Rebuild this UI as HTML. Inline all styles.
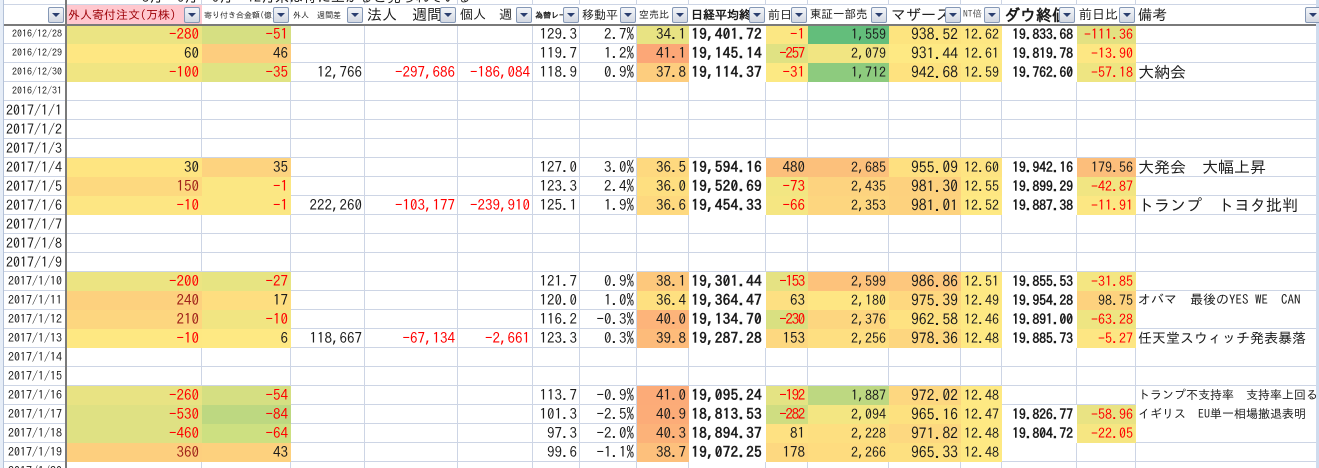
<!DOCTYPE html>
<html lang="ja"><head><meta charset="utf-8"><title>外人寄付注文</title>
<style>
html,body{margin:0;padding:0;width:1319px;height:468px;overflow:hidden;background:#fff}
body{position:relative;font-family:"IPAGothic","Liberation Mono","Noto Sans CJK JP",monospace;color:#1c1c1c}
table{position:absolute;left:0;top:0;border-collapse:separate;border-spacing:0;table-layout:fixed;width:1317px}
td{box-sizing:border-box;height:19px;padding:0 2px 0 0;border-right:1px solid #cdd5e5;border-bottom:1px solid #cdd5e5;font-size:15px;line-height:18px;text-align:right;white-space:nowrap;overflow:hidden}
td[style]{border-color:transparent}
tr.top td{height:5px;line-height:0;font-size:0}
tr.hd td{height:20px;border-right-color:transparent;border-bottom-color:transparent;text-align:left;padding:0 0 0 2px;line-height:18px}
.a{font-size:10px;padding-right:3px}.b{font-size:14px;padding-right:3px}.c{font-size:12px;padding-right:3px}
.r{color:#f00}.k{color:#a0221a}
.s{letter-spacing:-1.3px;padding-right:3px}
.n{font-weight:bold;font-size:15px;letter-spacing:.35px;padding-right:3px}
.w{font-weight:bold;font-size:13.5px;padding-right:3px}
.t{font-size:14px}.m{font-size:15.7px}
.note{text-align:left;padding-left:2px;font-size:16px}
.o{position:absolute;top:7px;width:16px;height:16px;box-sizing:border-box;border:1px solid #8598b6;border-radius:2px;background:linear-gradient(#f3f5f9,#d3d8e2)}
.o:after{content:"";position:absolute;left:3px;top:5px;border-left:4px solid transparent;border-right:4px solid transparent;border-top:4px solid #2b3f70}
.v{position:absolute;background:#7a7a7a}
.cut{position:absolute;left:142px;top:-10px;height:15px;font-size:14px;line-height:15px;white-space:pre;color:#222}
</style></head><body>
<table>
<colgroup><col style="width:66px"><col style="width:136px"><col style="width:89px"><col style="width:74px"><col style="width:93px"><col style="width:75px"><col style="width:47px"><col style="width:57px"><col style="width:52px"><col style="width:77px"><col style="width:42px"><col style="width:81px"><col style="width:72px"><col style="width:41px"><col style="width:75px"><col style="width:59px"><col style="width:181px"></colgroup>
<tr class="top"><td></td><td></td><td></td><td></td><td></td><td></td><td></td><td></td><td></td><td></td><td></td><td></td><td></td><td></td><td></td><td></td><td></td></tr>
<tr class="hd"><td></td>
<td style="background:#ffc7ce;color:#9c0006;font-size:12px">外人寄付注文(万株)</td>
<td style="font-size:8px">寄り付き合金額(億)</td>
<td style="font-size:8px">外人　週間差</td>
<td style="font-size:15px">法人　週間</td>
<td style="font-size:13px">個人　週</td>
<td style="font-size:8px;font-weight:bold">為替レー</td>
<td style="font-size:12px">移動平</td>
<td style="font-size:10px">空売比</td>
<td style="font-size:12px;font-weight:bold">日経平均終</td>
<td style="font-size:12px">前日</td>
<td style="font-size:11.5px">東証一部売</td>
<td style="font-size:15px">マザーズ</td>
<td style="font-size:9.5px;color:#555">NT倍</td>
<td style="font-size:16px;font-weight:bold">ダウ終値</td>
<td style="font-size:13px">前日比</td>
<td style="font-size:14.5px">備考</td></tr>
<tr><td class="a">2016/12/28</td><td class="r" style="background:#ebe483">-280</td><td class="r" style="background:#d6df82">-51</td><td></td><td></td><td></td><td>129.3</td><td>2.7%</td><td style="background:#e8e383">34.1</td><td class="n" style="background:#fff">19,401.72</td><td class="r" style="background:#fbe783">-1</td><td class="t" style="background:#63be7b">1,559</td><td class="m" style="background:#fde47f">938.52</td><td class="t" style="background:#fee782">12.62</td><td class="w" style="background:#fff">19.833.68</td><td class="t r" style="background:#e3e182">-111.36</td><td></td></tr>
<tr><td class="a">2016/12/29</td><td style="background:#fee782">60</td><td style="background:#fdcd7e">46</td><td></td><td></td><td></td><td>119.7</td><td>1.2%</td><td style="background:#fca777">41.1</td><td class="n" style="background:#fff">19,145.14</td><td class="s r" style="background:#e0e283">-257</td><td class="t" style="background:#f1e582">2,079</td><td class="m" style="background:#fee983">931.44</td><td class="t" style="background:#fee983">12.61</td><td class="w" style="background:#fff">19.819.78</td><td class="t r" style="background:#fde783">-13.90</td><td></td></tr>
<tr><td class="a">2016/12/30</td><td class="r" style="background:#f0e582">-100</td><td class="r" style="background:#e0e383">-35</td><td>12,766</td><td class="r">-297,686</td><td class="r">-186,084</td><td>118.9</td><td>0.9%</td><td style="background:#fdcd7e">37.8</td><td class="n" style="background:#fff">19,114.37</td><td class="r" style="background:#fce983">-31</td><td class="t" style="background:#8dcb7e">1,712</td><td class="m" style="background:#fee27f">942.68</td><td class="t" style="background:#fde883">12.59</td><td class="w" style="background:#fff">19.762.60</td><td class="t r" style="background:#eee582">-57.18</td><td class="note">大納会</td></tr>
<tr><td class="a">2016/12/31</td><td></td><td></td><td></td><td></td><td></td><td></td><td></td><td></td><td></td><td></td><td></td><td></td><td></td><td></td><td></td><td></td></tr>
<tr><td class="b">2017/1/1</td><td></td><td></td><td></td><td></td><td></td><td></td><td></td><td></td><td></td><td></td><td></td><td></td><td></td><td></td><td></td><td></td></tr>
<tr><td class="b">2017/1/2</td><td></td><td></td><td></td><td></td><td></td><td></td><td></td><td></td><td></td><td></td><td></td><td></td><td></td><td></td><td></td><td></td></tr>
<tr><td class="b">2017/1/3</td><td></td><td></td><td></td><td></td><td></td><td></td><td></td><td></td><td></td><td></td><td></td><td></td><td></td><td></td><td></td><td></td></tr>
<tr><td class="b">2017/1/4</td><td style="background:#fee581">30</td><td style="background:#fdd37f">35</td><td></td><td></td><td></td><td>127.0</td><td>3.0%</td><td style="background:#fed97f">36.5</td><td class="n" style="background:#fff">19,594.16</td><td style="background:#fcbf7b">480</td><td class="t" style="background:#fcc07b">2,685</td><td class="m" style="background:#fee080">955.09</td><td class="t" style="background:#fee482">12.60</td><td class="w" style="background:#fff">19.942.16</td><td class="t" style="background:#fcbe7b">179.56</td><td class="note">大発会　大幅上昇</td></tr>
<tr><td class="b">2017/1/5</td><td class="k" style="background:#fdd97f">150</td><td class="r" style="background:#fbe783">-1</td><td></td><td></td><td></td><td>123.3</td><td>2.4%</td><td style="background:#fedf80">36.0</td><td class="n" style="background:#fff">19,520.69</td><td class="r" style="background:#f2e682">-73</td><td class="t" style="background:#fdd37f">2,435</td><td class="m" style="background:#fdd17e">981.30</td><td class="t" style="background:#fee782">12.55</td><td class="w" style="background:#fff">19.899.29</td><td class="t r" style="background:#f1e582">-42.87</td><td></td></tr>
<tr><td class="b">2017/1/6</td><td class="r" style="background:#fde683">-10</td><td class="r" style="background:#fbe783">-1</td><td>222,260</td><td class="r">-103,177</td><td class="r">-239,910</td><td>125.1</td><td>1.9%</td><td style="background:#fed97f">36.6</td><td class="n" style="background:#fff">19,454.33</td><td class="r" style="background:#f5e682">-66</td><td class="t" style="background:#fdd67f">2,353</td><td class="m" style="background:#fdd27e">981.01</td><td class="t" style="background:#fee983">12.52</td><td class="w" style="background:#fff">19.887.38</td><td class="t r" style="background:#fce783">-11.91</td><td class="note">トランプ　トヨタ批判</td></tr>
<tr><td class="b">2017/1/7</td><td></td><td></td><td></td><td></td><td></td><td></td><td></td><td></td><td></td><td></td><td></td><td></td><td></td><td></td><td></td><td></td></tr>
<tr><td class="b">2017/1/8</td><td></td><td></td><td></td><td></td><td></td><td></td><td></td><td></td><td></td><td></td><td></td><td></td><td></td><td></td><td></td><td></td></tr>
<tr><td class="b">2017/1/9</td><td></td><td></td><td></td><td></td><td></td><td></td><td></td><td></td><td></td><td></td><td></td><td></td><td></td><td></td><td></td><td></td></tr>
<tr><td class="c">2017/1/10</td><td class="r" style="background:#ece482">-200</td><td class="r" style="background:#e7e482">-27</td><td></td><td></td><td></td><td>121.7</td><td>0.9%</td><td style="background:#fdc87c">38.1</td><td class="n" style="background:#fff">19,301.44</td><td class="s r" style="background:#e5e283">-153</td><td class="t" style="background:#fdc27b">2,599</td><td class="m" style="background:#fdc77d">986.86</td><td class="t" style="background:#fee983">12.51</td><td class="w" style="background:#fff">19.855.53</td><td class="t r" style="background:#f4e682">-31.85</td><td></td></tr>
<tr><td class="c">2017/1/11</td><td class="k" style="background:#fdd17e">240</td><td style="background:#fede80">17</td><td></td><td></td><td></td><td>120.0</td><td>1.0%</td><td style="background:#fee080">36.4</td><td class="n" style="background:#fff">19,364.47</td><td style="background:#fde082">63</td><td class="t" style="background:#fee683">2,180</td><td class="m" style="background:#fed87f">975.39</td><td class="t" style="background:#fee983">12.49</td><td class="w" style="background:#fff">19.954.28</td><td class="t" style="background:#fdd27e">98.75</td><td class="note" style="font-size:13px;background:#fff">オバマ　最後のYES WE　CAN</td></tr>
<tr><td class="c">2017/1/12</td><td class="k" style="background:#fdd67f">210</td><td class="r" style="background:#f1e582">-10</td><td></td><td></td><td></td><td>116.2</td><td>-0.3%</td><td style="background:#fdb47a">40.0</td><td class="n" style="background:#fff">19,134.70</td><td class="s r" style="background:#d9e081">-230</td><td class="t" style="background:#fdd67f">2,376</td><td class="m" style="background:#fee281">962.58</td><td class="t" style="background:#fee983">12.46</td><td class="w" style="background:#fff">19.891.00</td><td class="t r" style="background:#eee582">-63.28</td><td></td></tr>
<tr><td class="c">2017/1/13</td><td class="r" style="background:#fee882">-10</td><td style="background:#fee983">6</td><td>118,667</td><td class="r">-67,134</td><td class="r">-2,661</td><td>123.3</td><td>0.3%</td><td style="background:#fdbb7a">39.8</td><td class="n" style="background:#fff">19,287.28</td><td style="background:#fdd880">153</td><td class="t" style="background:#fedf81">2,256</td><td class="m" style="background:#fdd67f">978.36</td><td class="t" style="background:#fee983">12.48</td><td class="w" style="background:#fff">19.885.73</td><td class="t r" style="background:#fde683">-5.27</td><td class="note" style="font-size:14px;background:#fff">任天堂スウィッチ発表暴落</td></tr>
<tr><td class="c">2017/1/14</td><td></td><td></td><td></td><td></td><td></td><td></td><td></td><td></td><td></td><td></td><td></td><td></td><td></td><td></td><td></td><td></td></tr>
<tr><td class="c">2017/1/15</td><td></td><td></td><td></td><td></td><td></td><td></td><td></td><td></td><td></td><td></td><td></td><td></td><td></td><td></td><td></td><td></td></tr>
<tr><td class="c">2017/1/16</td><td class="r" style="background:#e8e383">-260</td><td class="r" style="background:#d5df82">-54</td><td></td><td></td><td></td><td>113.7</td><td>-0.9%</td><td style="background:#fcab78">41.0</td><td class="n" style="background:#fff">19,095.24</td><td class="s r" style="background:#e4e383">-192</td><td class="t" style="background:#bdd881">1,887</td><td class="m" style="background:#fdd780">972.02</td><td class="t" style="background:#fee983">12.48</td><td></td><td></td><td class="note" style="font-size:12px">トランプ不支持率　支持率上回る</td></tr>
<tr><td class="c">2017/1/17</td><td class="r" style="background:#dfe183">-530</td><td class="r" style="background:#bdd881">-84</td><td></td><td></td><td></td><td>101.3</td><td>-2.5%</td><td style="background:#fcac78">40.9</td><td class="n" style="background:#fff">18,813.53</td><td class="s r" style="background:#cfdd81">-282</td><td class="t" style="background:#f3e682">2,094</td><td class="m" style="background:#fde17f">965.16</td><td class="t" style="background:#fee983">12.47</td><td class="w" style="background:#fff">19.826.77</td><td class="t r" style="background:#e9e383">-58.96</td><td class="note" style="font-size:12px">イギリス　EU単一相場撤退表明</td></tr>
<tr><td class="c">2017/1/18</td><td class="r" style="background:#dfe183">-460</td><td class="r" style="background:#cde081">-64</td><td></td><td></td><td></td><td>97.3</td><td>-2.0%</td><td style="background:#fcb279">40.3</td><td class="n" style="background:#fff">18,894.37</td><td style="background:#fee182">81</td><td class="t" style="background:#fddf80">2,228</td><td class="m" style="background:#fdd880">971.82</td><td class="t" style="background:#fee983">12.48</td><td class="w" style="background:#fff">19.804.72</td><td class="t r" style="background:#f6e682">-22.05</td><td></td></tr>
<tr><td class="c">2017/1/19</td><td class="k" style="background:#fdcf7e">360</td><td style="background:#fdd17e">43</td><td></td><td></td><td></td><td>99.6</td><td>-1.1%</td><td style="background:#fdc07c">38.7</td><td class="n" style="background:#fff">19,072.25</td><td style="background:#fdd880">178</td><td class="t" style="background:#fedc7f">2,266</td><td class="m" style="background:#fde080">965.33</td><td class="t" style="background:#fee983">12.48</td><td></td><td></td><td></td></tr>
<tr><td class="c">2017/1/20</td><td></td><td></td><td></td><td></td><td></td><td></td><td></td><td></td><td></td><td></td><td></td><td></td><td></td><td></td><td></td><td></td></tr>
</table>
<div class="cut">3月　6月　9月　12月末は特に上がると見られている</div>
<div class="v" style="left:65px;top:0;width:2px;height:468px"></div>
<div class="v" style="left:0;top:24px;width:1317px;height:2px"></div>
<div style="position:absolute;left:0;top:0;width:3px;height:468px;background:#e6edf7;border-right:1px solid #b4c2d8"></div>
<div style="position:absolute;left:1316px;top:0;width:3px;height:468px;background:#cfdcee"></div>
<div class="o" style="left:48px"></div><div class="o" style="left:184px"></div><div class="o" style="left:273px"></div><div class="o" style="left:347px"></div><div class="o" style="left:440px"></div><div class="o" style="left:516px"></div><div class="o" style="left:563px"></div><div class="o" style="left:620px"></div><div class="o" style="left:672px"></div><div class="o" style="left:749px"></div><div class="o" style="left:791px"></div><div class="o" style="left:871px"></div><div class="o" style="left:945px"></div><div class="o" style="left:984px"></div><div class="o" style="left:1059px"></div><div class="o" style="left:1119px"></div><div class="o" style="left:1305px"></div>
</body></html>
